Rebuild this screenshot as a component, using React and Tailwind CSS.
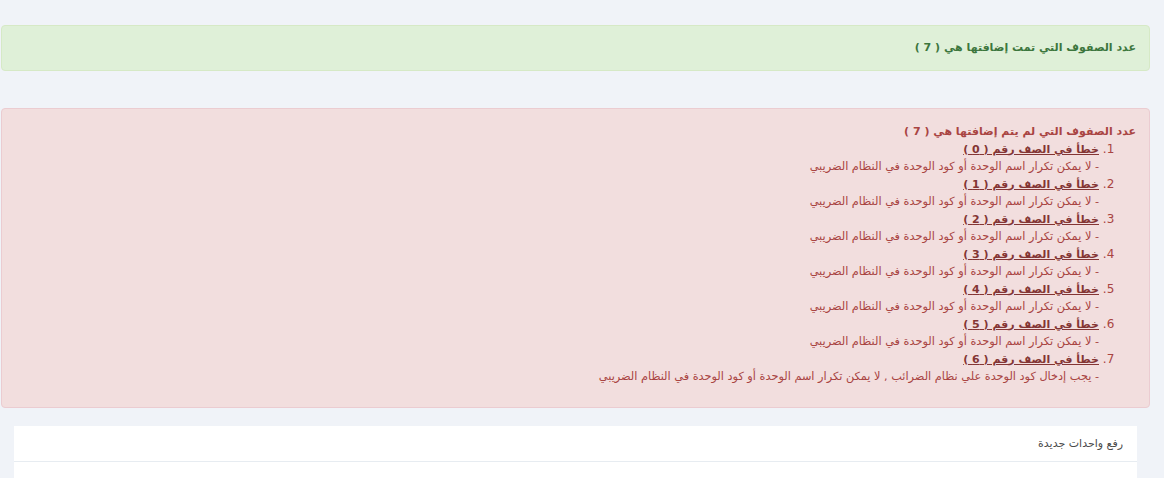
import React from 'react';

const rows = [
  { n: 0, msg: 'لا يمكن تكرار اسم الوحدة أو كود الوحدة في النظام الضريبي' },
  { n: 1, msg: 'لا يمكن تكرار اسم الوحدة أو كود الوحدة في النظام الضريبي' },
  { n: 2, msg: 'لا يمكن تكرار اسم الوحدة أو كود الوحدة في النظام الضريبي' },
  { n: 3, msg: 'لا يمكن تكرار اسم الوحدة أو كود الوحدة في النظام الضريبي' },
  { n: 4, msg: 'لا يمكن تكرار اسم الوحدة أو كود الوحدة في النظام الضريبي' },
  { n: 5, msg: 'لا يمكن تكرار اسم الوحدة أو كود الوحدة في النظام الضريبي' },
  { n: 6, msg: 'يجب إدخال كود الوحدة علي نظام الضرائب , لا يمكن تكرار اسم الوحدة أو كود الوحدة في النظام الضريبي' },
];

export default function App() {
  return (
    <div className="flex min-h-[478px] bg-white font-['DejaVu_Sans',sans-serif]">
      <div dir="rtl" className="flex-1 bg-[#f0f3f8] pt-[25px] pr-[14px] pl-[1px]">
        {/* added rows */}
        <div className="rounded-[4px] border border-[#d6e9c6] bg-[#dff0d8] px-[13px] pt-[13px] pb-[14px] text-[11px] leading-[17px] font-bold text-[#3c763d]">
          عدد الصفوف التي تمت إضافتها هي ( 7 )
        </div>

        {/* failed rows */}
        <div className="mt-[37px] rounded-[4px] border border-[#ebccd1] bg-[#f2dede] px-[13px] pt-[14px] pb-[21px] text-[11px] leading-[17.5px] text-[#a94442]">
          <div className="font-bold">عدد الصفوف التي لم يتم إضافتها هي ( 7 )</div>
          <ol className="list-decimal pr-[37px] text-[12px]">
            {rows.map((r) => (
              <li key={r.n}>
                <a className="text-[11px] font-bold text-[#843534] underline">خطأ في الصف رقم ( {r.n} )</a>
                <div className="text-[11.3px]">- {r.msg}</div>
              </li>
            ))}
          </ol>
        </div>

        {/* upload card */}
        <div className="mt-[18px] mr-[13px] ml-[13px] bg-white">
          <div className="border-b border-[#e7ecf1] px-[14px] pt-[9px] pb-[8px] text-[11px] leading-[18px] text-[#4a4a4a]">
            رفع واحدات جديدة
          </div>
          <div className="h-[20px]" />
        </div>
      </div>
      <div className="w-[10px] bg-white" />
    </div>
  );
}
